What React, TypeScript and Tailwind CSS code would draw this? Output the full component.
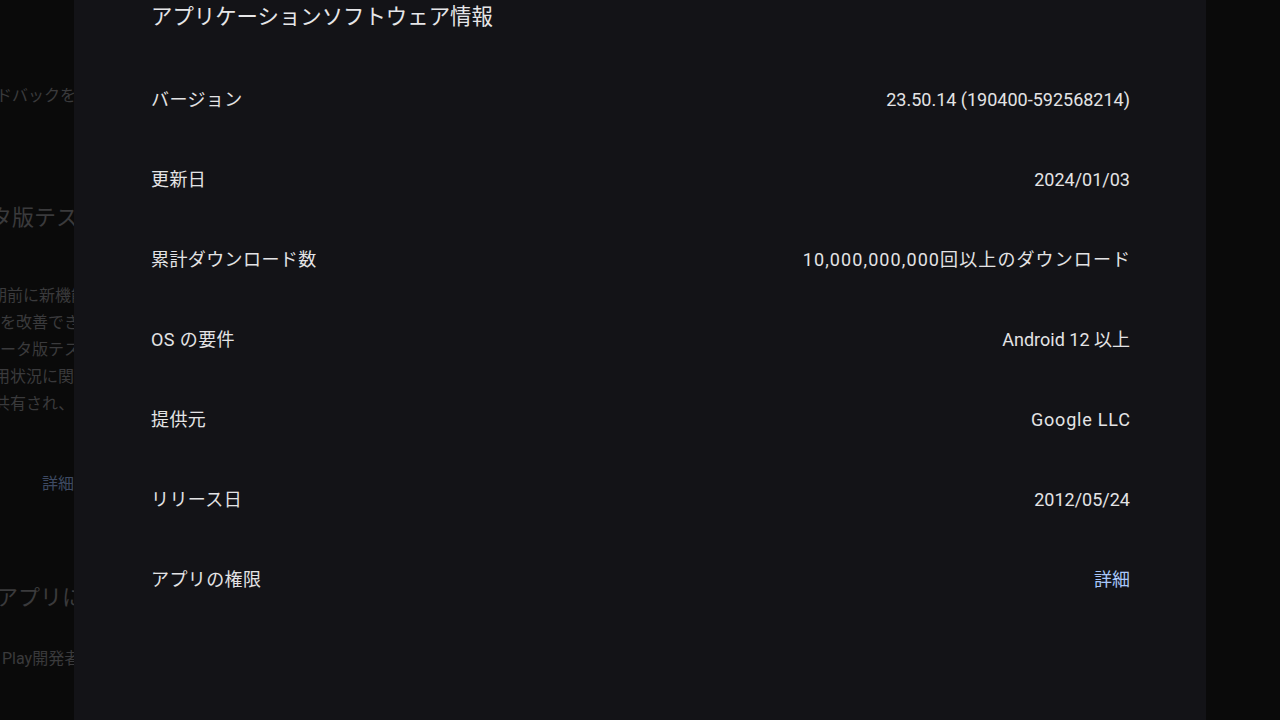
import React from "react";

const rows: { label: string; value: React.ReactNode; link?: boolean }[] = [
  { label: "バージョン", value: "23.50.14 (190400-592568214)" },
  { label: "更新日", value: "2024/01/03" },
  {
    label: "累計ダウンロード数",
    value: <span className="tracking-[1.1px] mr-[-1.1px]">10,000,000,000回以上のダウンロード</span>,
  },
  { label: "OS の要件", value: "Android 12 以上" },
  { label: "提供元", value: <span className="tracking-[0.8px] mr-[-0.8px]">Google LLC</span> },
  { label: "リリース日", value: "2012/05/24" },
  { label: "アプリの権限", value: "詳細", link: true },
];

export default function App() {
  return (
    <div
      className="flex h-[720px] w-[1280px] overflow-hidden bg-[#0a0a0a]"
      style={{ fontFamily: 'Roboto, "Noto Sans CJK JP", sans-serif' }}
    >
      {/* background page strip (dimmed behind dialog) */}
      <div className="w-[74px] shrink-0 overflow-hidden whitespace-nowrap text-[#3a3a3c]">
        <div className="mt-[84px] ml-[-4px] h-[24px] text-[16px] leading-[24px]">ドバックを送信</div>
        <div className="mt-[94px] ml-[-32px] h-[32px] text-[22px] leading-[32px]">ータ版テスト</div>
        <div className="mt-[48px] flex flex-col text-[16px] leading-[27px]">
          <div className="ml-[-9px]">期前に新機能</div>
          <div className="ml-[0px]">を改善できます</div>
          <div className="ml-[0px]">ータ版テスト</div>
          <div className="ml-[-6px]">用状況に関する</div>
          <div className="ml-[-6px]">共有され、</div>
        </div>
        <div className="mt-[55px] ml-[42px] h-[24px] text-[16px] leading-[24px] text-[#3e4a63]">詳細</div>
        <div className="mt-[86px] ml-[-4px] h-[32px] text-[22px] leading-[32px]">アプリについて</div>
        <div className="mt-[33px] ml-[2px] h-[24px] text-[16px] leading-[24px]">Play開発者</div>
      </div>

      {/* dialog panel */}
      <div className="w-[1132px] shrink-0 bg-[#131317] pl-[77px] pr-[76px]">
        <div className="flex h-[34px] items-center whitespace-nowrap text-[21.4px] text-[#e6e6e8]">
          アプリケーションソフトウェア情報
        </div>
        <div className="mt-[25px] flex flex-col">
          {rows.map((r) => (
            <div key={r.label} className="flex h-[80px] items-center justify-between whitespace-nowrap text-[18px]">
              <span className="tracking-[0.4px] text-[#e3e3e5]">{r.label}</span>
              <span className={r.link ? "text-[#a8c7fa]" : "text-[#e3e3e5]"}>{r.value}</span>
            </div>
          ))}
        </div>
      </div>

      <div className="flex-1 bg-[#0a0a0a]" />
    </div>
  );
}
